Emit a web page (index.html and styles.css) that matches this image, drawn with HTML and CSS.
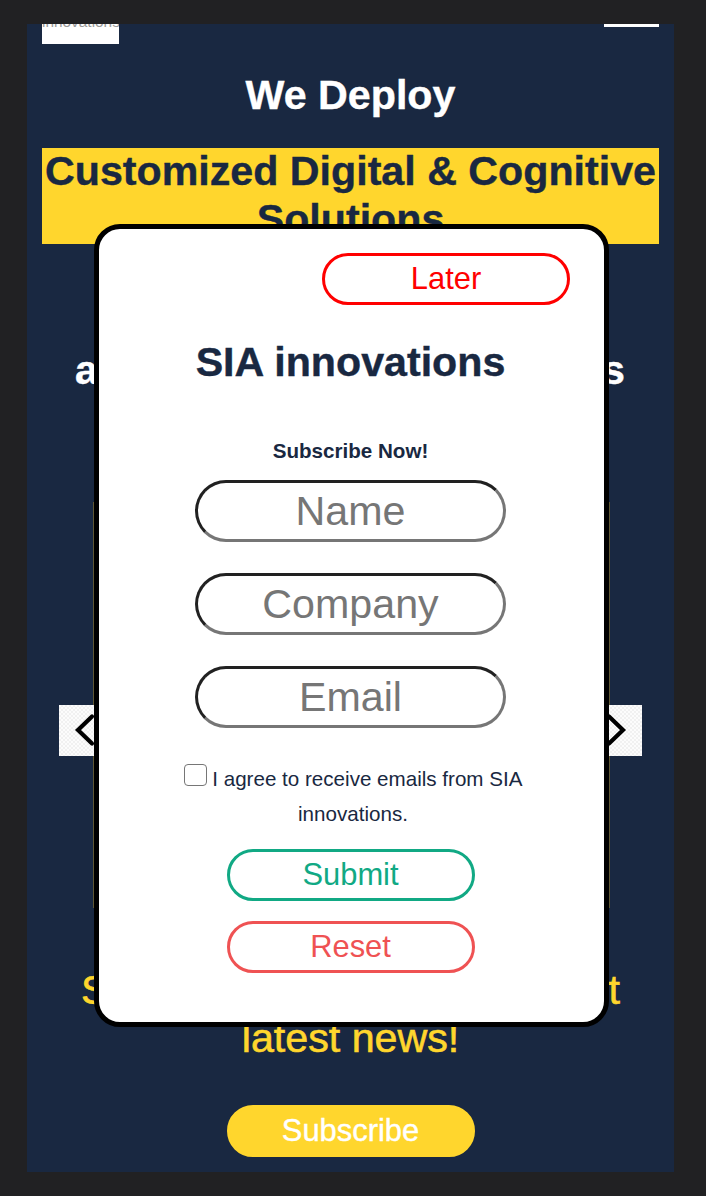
FILE: index.html
```html
<!DOCTYPE html>
<html lang="en">
<head>
<meta charset="utf-8">
<title>SIA innovations</title>
<link rel="stylesheet" href="styles.css">
</head>
<body>
<main class="screen">
  <header class="header">
    <div class="logo"><span class="logo-text">innovations</span></div>
    <div class="menu-bar"></div>
  </header>
  <h1 class="intro">We Deploy</h1>
  <h1 class="highlight">Customized Digital &amp; Cognitive Solutions</h1>
  <h1 class="tagline"><span>a</span><span>s</span></h1>
  <section class="carousel">
    <div class="slide"></div>
    <div class="controls">
      <div class="arrow"><svg width="52" height="52" viewBox="0 0 52 52"><path d="M33 12.500 19 26 33 39.500"/></svg></div>
      <div class="arrow"><svg width="52" height="52" viewBox="0 0 52 52"><path d="M19 12.500 33 26 19 39.500"/></svg></div>
    </div>
  </section>
  <div class="news"><div class="news-line"><span>S</span><span>t</span></div><div>latest news!</div></div>
  <button class="btn subscribe">Subscribe</button>
</main>
<form class="modal">
  <button type="button" class="btn later">Later</button>
  <h1 class="title">SIA innovations</h1>
  <h5 class="subtitle">Subscribe Now!</h5>
  <input class="field" placeholder="Name">
  <input class="field" placeholder="Company">
  <input class="field" placeholder="Email">
  <label class="agree"><input class="check" type="checkbox"> I agree to receive emails from SIA innovations.</label>
  <button type="button" class="btn submit">Submit</button>
  <button type="button" class="btn reset">Reset</button>
</form>
</body>
</html>
```
FILE: styles.css
```css
* { box-sizing: border-box; margin: 0; }
body {
  position: relative;
  height: 1196px;
  padding: 24px 32px 24px 27px;
  overflow: hidden;
  background: #212123;
  font-family: "Liberation Sans", Arial, Helvetica, sans-serif;
}
h1 { font-size: 41.2px; line-height: 48px; font-weight: 700; text-align: center; -webkit-text-stroke: 0.4px currentColor; }
.screen {
  display: flex;
  flex-direction: column;
  height: 1148px;
  padding: 0 15px;
  overflow: hidden;
  background: #192841;
  color: #fff;
}
.header { display: flex; justify-content: space-between; height: 20px; }
.logo { width: 77px; height: 20px; background: #fff; overflow: hidden; }
.logo-text {
  display: block;
  margin-top: -11px;
  font-size: 15.4px;
  line-height: 17px;
  color: #999;
  text-align: center;
}
.menu-bar { width: 55px; height: 3px; background: #fff; }
.intro { margin-top: 27px; }
.highlight { margin-top: 29px; height: 96px; background: #ffd62d; color: #192841; line-height: 47.5px; }
.tagline { display: flex; justify-content: space-between; margin-top: 102px; padding: 0 34px 0 33px; }
.carousel { display: grid; margin: 108px 17px 0; height: 406px; }
.slide, .controls { grid-area: 1 / 1; }
.slide { margin: 0 32px 0 34px; border: solid #5f5835; border-width: 0 1px; }
.controls { display: flex; justify-content: space-between; align-items: flex-start; padding-top: 203px; }
.arrow {
  width: 52px;
  height: 51px;
  background: repeating-conic-gradient(#f1f1f1 0 25%, #fcfcfc 0 50%) 0 0 / 4px 4px;
}
.arrow svg { display: block; margin-top: -1px; fill: none; stroke: #000; stroke-width: 4.200; stroke-linecap: round; stroke-linejoin: miter; }
.news { margin-top: 58px; font-size: 41.2px; line-height: 48px; color: #ffd62d; text-align: center; -webkit-text-stroke: 0.6px currentColor; }
.news-line { display: flex; justify-content: space-between; padding: 0 39px 0 39px; }
.btn {
  flex: none;
  width: 248px;
  height: 52px;
  padding: 0;
  border: 3px solid currentColor;
  border-radius: 26px;
  background: #fff;
  font-family: inherit;
  font-size: 30.9px;
  line-height: 44px;
}
.subscribe { align-self: center; margin-top: 43px; border-color: #ffd62d; background: #ffd62d; color: #fff; -webkit-text-stroke: 0.4px currentColor; }
.modal {
  position: absolute;
  left: 94px;
  top: 224px;
  display: flex;
  flex-direction: column;
  align-items: center;
  width: 515px;
  height: 803px;
  padding: 24px 34px 24px 32px;
  border: 5px solid #000;
  border-radius: 26px;
  background: #fff;
  color: #192841;
}
.later { align-self: flex-end; color: #f00; }
.title { margin-top: 33px; }
.subtitle { margin: 53px 0 17px; font-size: 20.6px; line-height: 24px; }
.field {
  flex: none;
  width: 311px;
  height: 62px;
  margin-bottom: 31px;
  padding: 0;
  border: 3px solid;
  border-color: #212121 #767676 #767676 #212121;
  border-radius: 31px;
  background: #fff;
  font-family: inherit;
  font-size: 41.2px;
  text-align: center;
}
.field::placeholder { color: #767676; opacity: 1; }
.agree { width: 345px; height: 70px; margin: 2px 0 0 5px; font-size: 20.6px; line-height: 35px; text-align: center; }
.check {
  appearance: none;
  width: 23px;
  height: 22px;
  margin-top: -3px;
  border: 1.500px solid #767676;
  border-radius: 4px;
  background: #fff;
  vertical-align: 0;
}
.submit { margin-top: 18px; color: #11a984; }
.reset { margin-top: 20px; color: #ef5253; }
```
